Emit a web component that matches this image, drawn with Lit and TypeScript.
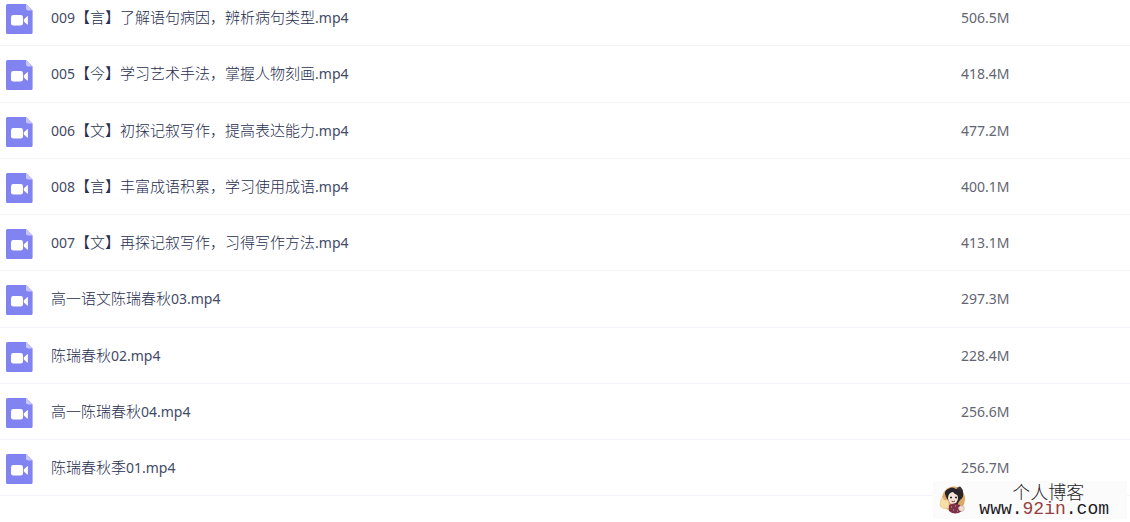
import { LitElement, html, css } from "lit";
import { customElement, property } from "lit/decorators.js";

interface FileEntry {
  name: string;
  size: string;
}

const FILES: FileEntry[] = [
  { name: "009【言】了解语句病因，辨析病句类型.mp4", size: "506.5M" },
  { name: "005【今】学习艺术手法，掌握人物刻画.mp4", size: "418.4M" },
  { name: "006【文】初探记叙写作，提高表达能力.mp4", size: "477.2M" },
  { name: "008【言】丰富成语积累，学习使用成语.mp4", size: "400.1M" },
  { name: "007【文】再探记叙写作，习得写作方法.mp4", size: "413.1M" },
  { name: "高一语文陈瑞春秋03.mp4", size: "297.3M" },
  { name: "陈瑞春秋02.mp4", size: "228.4M" },
  { name: "高一陈瑞春秋04.mp4", size: "256.6M" },
  { name: "陈瑞春秋季01.mp4", size: "256.7M" },
];

@customElement("video-icon")
class VideoIcon extends LitElement {
  static styles = css`
    :host {
      display: block;
      width: 27px;
      height: 30px;
    }
    .icon {
      display: block;
    }
  `;

  render() {
    return html`<svg class="icon" width="27" height="30" viewBox="0 0 27 30" aria-hidden="true">
      <path d="M1.5 0H20L26.6 6.6V28.5a1.5 1.5 0 0 1-1.5 1.5H1.5a1.5 1.5 0 0 1-1.5-1.5V1.5a1.5 1.5 0 0 1 1.5-1.5Z" fill="#8183f1" />
      <path d="M20 0L26.6 6.6H22a2 2 0 0 1-2-2Z" fill="#c5c6f9" />
      <rect x="5" y="11" width="12" height="10.6" rx="2.4" fill="#fff" />
      <path d="M17.8 15.4L21.2 12.2Q21.9 11.8 21.9 12.6V20Q21.9 20.8 21.2 20.4L17.8 17.4Z" fill="#fff" />
    </svg>`;
  }
}

@customElement("blog-mark")
class BlogMark extends LitElement {
  static styles = css`
    :host {
      display: flex;
      align-items: center;
      gap: 12px;
      box-sizing: border-box;
      height: 38px;
      padding: 0 18px 0 6px;
      background: #fcfbfc;
      color: #1c1c24;
    }
    .avatar {
      flex: none;
    }
    .words {
      display: flex;
      flex-direction: column;
      align-items: center;
    }
    .title {
      padding-left: 8px;
      font: 18px/18px "Noto Sans CJK SC", sans-serif;
      font-weight: 300;
    }
    .site {
      font: 18px/18px "Liberation Mono", monospace;
      color: inherit;
      text-decoration: none;
    }
    .accent {
      color: #96403c;
    }
  `;

  render() {
    return html`
      <svg class="avatar" width="28" height="30" viewBox="0 0 28 30" aria-hidden="true">
        <ellipse cx="14.5" cy="14" rx="11.5" ry="12.5" fill="#dca865" />
        <path d="M7 12Q4 6 9 4Q13 1 17 4Q24 1 24 7Q25 13 21 15L18 20L10 17Z" fill="#29242b" />
        <path d="M18 3Q22-1 23 5Q20 7 18 3Z" fill="#3a3137" />
        <ellipse cx="14" cy="13" rx="5" ry="6" fill="#f5e5d9" />
        <path d="M8 11Q10 6 14 7Q17 11 20 10L18 6L10 5Z" fill="#29242b" />
        <path d="M11 12.5h2M16 12.5h2" stroke="#2c2530" stroke-width="1.4" />
        <path d="M12.5 16Q14 17.5 16 16" stroke="#9d3540" fill="none" />
        <path d="M10 20Q15 17 21 20L23 26Q16 31 10 26Z" fill="#7d3047" />
        <path d="M12 22h1M16 21h1M19 23h1M14 25h1M18 26h1" stroke="#e0a3ad" />
        <path d="M2 14Q4 11 5 15L9 15Q11 19 9 23Q4 25 1 21Z" fill="#f7dfaa" stroke="#e4bd80" stroke-width=".6" />
        <circle cx="22.5" cy="23.5" r="2.8" fill="#f2dfd0" stroke="#a39993" stroke-width=".5" />
      </svg>
      <div class="words">
        <span class="title">个人博客</span>
        <a class="site" href="#">www.<span class="accent">92in</span>.com</a>
      </div>
    `;
  }
}

@customElement("app-root")
class AppRoot extends LitElement {
  @property({ attribute: false }) files: FileEntry[] = FILES;

  static styles = css`
    :host {
      display: block;
      position: relative;
      min-height: 100vh;
      overflow: hidden;
      background: #fff;
      font-family: "Noto Sans", "Noto Sans CJK SC", sans-serif;
    }
    .files {
      width: 100%;
      margin-top: -10px;
      border-collapse: separate;
      border-spacing: 0;
      table-layout: fixed;
    }
    .size-column {
      width: 169px;
    }
    .row {
      height: 56px;
    }
    .row:nth-child(4n + 2) {
      height: 57px;
    }
    .cell {
      box-sizing: border-box;
      padding: 11px 0 0;
      border-bottom: 1px solid #f3f4fa;
      text-align: left;
      vertical-align: top;
      font-weight: 400;
    }
    .entry {
      display: flex;
      align-items: center;
      gap: 18px;
      padding-left: 6px;
    }
    .thumb {
      padding-top: 3px;
    }
    .name {
      color: #262e4e;
      font-size: 15px;
      font-weight: 300;
      line-height: 20px;
      text-decoration: none;
      white-space: nowrap;
    }
    .latin {
      color: #424a66;
      font-size: 14px;
      font-weight: 400;
    }
    .size {
      padding-top: 18px;
      color: #636672;
      font-size: 14px;
      line-height: 20px;
    }
    .mark {
      position: absolute;
      right: 3px;
      bottom: 3px;
    }
  `;

  private renderName(name: string) {
    return name
      .split(/([\x20-\x7e]+)/)
      .filter((part) => part)
      .map((part) => (/^[\x20-\x7e]/.test(part) ? html`<span class="latin">${part}</span>` : part));
  }

  render() {
    return html`
      <table class="files" aria-label="Files">
        <colgroup>
          <col />
          <col class="size-column" />
        </colgroup>
        <tbody>
          ${this.files.map(
            (file) => html`<tr class="row">
              <th class="cell" scope="row">
                <div class="entry">
                  <div class="thumb"><video-icon></video-icon></div>
                  <a class="name" href="#">${this.renderName(file.name)}</a>
                </div>
              </th>
              <td class="cell size">${file.size}</td>
            </tr>`,
          )}
        </tbody>
      </table>
      <blog-mark class="mark"></blog-mark>
    `;
  }
}
